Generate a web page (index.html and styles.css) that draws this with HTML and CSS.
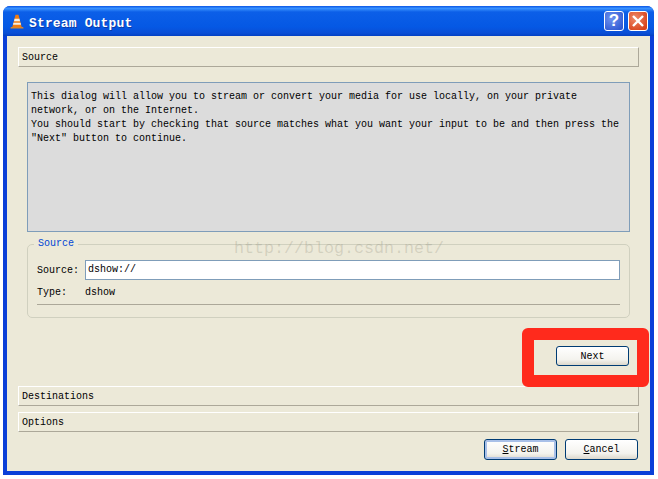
FILE: index.html
```html
<!DOCTYPE html>
<html><head>
    <title>Stream Output</title>
    <meta charset="UTF-8">
    <link rel="stylesheet" href="styles.css">
    </head>

    <body>
        <div class="window">
            <div class="titlebar">
                <svg class="cone" width="14" height="15" viewBox="0 0 16 18" preserveAspectRatio="none">
                    <path d="M1 15.5 L15 15.5 L15.5 17.5 L0.5 17.5 Z" fill="#d9852a"/>
                    <path d="M6.3 1 L9.7 1 L13.4 15.5 L2.6 15.5 Z" fill="#f07c12"/>
                    <path d="M5.2 5.6 L10.8 5.6 L11.5 8.6 L4.5 8.6 Z" fill="#f4f0e6"/>
                    <path d="M3.9 10.6 L12.1 10.6 L12.6 12.8 L3.4 12.8 Z" fill="#f4f0e6"/>
                </svg>
                <span class="title-text">Stream Output</span>
                <div class="title-btn help-btn">?</div>
                <div class="title-btn close-btn">
                    <svg width="14" height="14" viewBox="0 0 14 14">
                        <path d="M2 2 L12 12 M12 2 L2 12" stroke="#ffffff" stroke-width="2.4" fill="none"/>
                    </svg>
                </div>
            </div>

            <div class="client">
                <div class="section-head">Source</div>

                <div class="intro">
                    This dialog will allow you to stream or convert your media for use locally, on your private network, or on the Internet.<br>
                    You should start by checking that source matches what you want your input to be and then press the "Next" button to continue.
                </div>

                <fieldset class="source-group">
                    <legend>Source</legend>
                    <div class="field-row">
                        <label>Source:</label>
                        <div class="text-input">dshow://</div>
                    </div>
                    <div class="field-row type-row">
                        <label>Type:</label>
                        <span>dshow</span>
                    </div>
                    <div class="rule"></div>
                </fieldset>

                <div class="next-row">
                    <button class="btn next-btn">Next</button>
                </div>

                <div class="section-head">Destinations</div>
                <div class="section-head options-head">Options</div>

                <div class="bottom-row">
                    <button class="btn default-btn"><u>S</u>tream</button>
                    <button class="btn"><u>C</u>ancel</button>
                </div>
            </div>

            <div class="watermark">http://blog.csdn.net/</div>
            <div class="red-mark"></div>
        </div>
    </body>
</html>
```

FILE: styles.css
```css
html, body {
    margin: 0;
    padding: 0;
    background: #ffffff;
}

body {
    padding: 6px 4px 4px 3px;
    font-family: "Liberation Mono", monospace;
    font-size: 10px;
    color: #000000;
}

.window {
    position: relative;
    width: 651px;
    height: 469px;
    display: flex;
    flex-direction: column;
    box-sizing: border-box;
    background: #0a3fd8;
    border-radius: 7px 7px 0 0;
    padding: 0 4px 4px 4px;
}

.titlebar {
    height: 30px;
    margin: 0 -4px;
    padding: 0 6px 0 7px;
    display: flex;
    align-items: center;
    background: linear-gradient(to bottom, #0a56e6 0%, #3a93ff 8%, #0c5fe8 20%, #0558e4 70%, #0a4fd6 90%, #0341c4 100%);
    border-radius: 7px 7px 0 0;
}

.cone {
    flex: none;
}

.title-text {
    margin: 4px 0 0 5px;
    flex: 1;
    color: #ffffff;
    font-size: 13px;
    font-weight: bold;
    letter-spacing: 0.15px;
    text-shadow: 1px 1px 0 #0b3aa8;
}

.title-btn {
    width: 20px;
    height: 20px;
    box-sizing: border-box;
    margin-left: 4px;
    border: 1px solid #ffffff;
    border-radius: 3px;
    display: flex;
    align-items: center;
    justify-content: center;
}

.help-btn {
    background: radial-gradient(circle at 35% 35%, #6f93ef, #2f58d2 85%);
    color: #ffffff;
    font-family: "Liberation Sans", sans-serif;
    font-size: 17px;
    font-weight: bold;
}

.close-btn {
    background: radial-gradient(circle at 35% 35%, #ee8a6a, #d8431c 80%);
}

.client {
    flex: 1;
    background: #ece9d8;
    padding: 11px 11px 0 11px;
    display: flex;
    flex-direction: column;
}

.section-head {
    height: 20px;
    box-sizing: border-box;
    flex: none;
    padding-left: 3px;
    line-height: 20px;
    border-top: 1px solid #ffffff;
    border-left: 1px solid #ffffff;
    border-right: 1px solid #aca899;
    border-bottom: 1px solid #aca899;
}

.options-head {
    margin-top: 6px;
}

.intro {
    margin: 15px 9px 0 9px;
    height: 150px;
    box-sizing: border-box;
    flex: none;
    padding: 7px 3px;
    line-height: 14px;
    background: #dcdcdc;
    border: 1px solid #7f9db9;
}

.source-group {
    margin: 6px 9px 0 9px;
    height: 80px;
    box-sizing: border-box;
    flex: none;
    padding: 0 9px;
    border: 1px solid #d0d0bf;
    border-radius: 5px;
    min-width: 0;
}

.source-group legend {
    margin-left: -3px;
    padding: 0 4px;
    color: #0046d5;
    line-height: 12px;
}

.field-row {
    display: flex;
    align-items: center;
    height: 20px;
    margin-top: 10px;
}

.field-row label {
    width: 48px;
    flex: none;
}

.type-row {
    margin-top: 2px;
}

.text-input {
    flex: 1;
    height: 20px;
    box-sizing: border-box;
    border: 1px solid #7f9db9;
    background: #ffffff;
    padding-left: 2px;
    line-height: 18px;
}

.rule {
    height: 1px;
    margin-top: 2px;
    background: #aca899;
}

.next-row {
    height: 68px;
    flex: none;
    display: flex;
    justify-content: flex-end;
    align-items: flex-start;
    padding: 28px 10px 0 0;
    box-sizing: border-box;
}

.btn {
    width: 73px;
    height: 21px;
    padding: 0;
    border: 1px solid #003c74;
    border-radius: 3px;
    background: linear-gradient(to bottom, #ffffff 0%, #f4f3ee 70%, #dcd8cc 100%);
    font-family: "Liberation Mono", monospace;
    font-size: 10px;
    color: #000000;
}

.next-row .btn {
    height: 20px;
}

.default-btn {
    box-shadow: inset 0 0 0 2px #a9c0e8;
}

.bottom-row {
    margin-top: 7px;
    padding-right: 1px;
    display: flex;
    justify-content: flex-end;
    gap: 8px;
}

.watermark {
    position: absolute;
    left: 231px;
    top: 233px;
    font-size: 16.67px;
    line-height: 20px;
    color: rgba(120, 120, 100, 0.22);
    pointer-events: none;
}

.red-mark {
    position: absolute;
    left: 519px;
    top: 322px;
    width: 127px;
    height: 59px;
    box-sizing: border-box;
    border: 12px solid #ff2a1c;
    border-radius: 6px;
    pointer-events: none;
}
```
